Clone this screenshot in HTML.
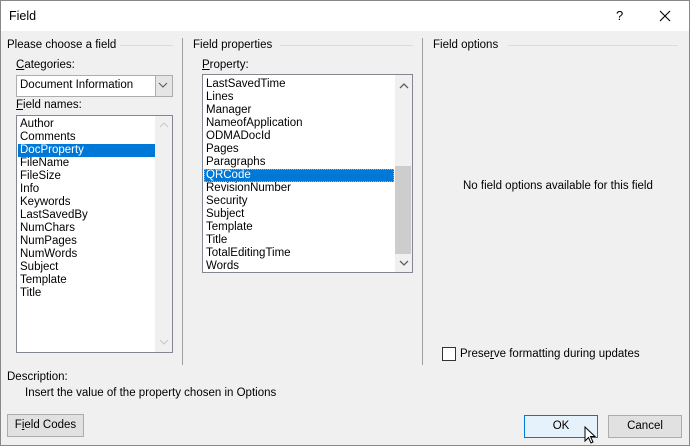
<!DOCTYPE html>
<html><head><meta charset="utf-8"><style>
*{margin:0;padding:0;box-sizing:border-box}
body{width:690px;height:446px;overflow:hidden;background:#f0f0f0;font-family:"Liberation Sans",sans-serif;font-size:11.5px;color:#000;position:relative}
.a{position:absolute;white-space:nowrap}
.win{position:absolute;left:0;top:0;width:690px;height:446px;border:1px solid #888;}
.title{position:absolute;left:1px;top:1px;width:688px;height:30px;background:#fff}
.line{position:absolute;height:1px;background:#dcdcdc}
.vl{position:absolute;width:1px;background:#a0a0a0}
.list{position:absolute;background:#fff;border:1px solid #828790}
.it{position:absolute;left:3px;height:13px;line-height:13px}
.sel{background:#0078d7;color:#fff}
u{text-decoration:underline}
.btn{position:absolute;border:1px solid #adadad;background:#e1e1e1;text-align:center;line-height:21px}
.sb{position:absolute;background:#f0f0f0}
</style></head><body>
<div class="win"></div>
<div class="title"></div>
<div class="a" style="left:9px;top:9px;font-size:12.5px">Field</div>
<div class="a" style="left:616px;top:8px;font-size:13px">?</div>
<svg class="a" style="left:659px;top:10px" width="12" height="12"><path d="M1 1L11 11M11 1L1 11" stroke="#000" stroke-width="1.1"/></svg>

<div class="a" style="left:7px;top:39px">Please choose a field</div>
<div class="line" style="left:120px;top:45px;width:53px"></div>
<div class="vl" style="left:182px;top:38px;height:327px"></div>
<div class="a" style="left:16px;top:59px"><u>C</u>ategories:</div>
<div class="a" style="left:16px;top:75px;width:157px;height:22px;background:#fff;border:1px solid #adadad"></div>
<div class="a" style="left:20px;top:79px">Document Information</div>
<div class="a" style="left:155px;top:76px;width:17px;height:20px;background:#e5e5e5;border-left:1px solid #adadad"></div>
<svg class="a" style="left:158px;top:82px" width="10" height="6"><path d="M1 1L5 5L9 1" stroke="#555" fill="none"/></svg>
<div class="a" style="left:16px;top:99px"><u>F</u>ield names:</div>
<div class="list" style="left:16px;top:115px;width:157px;height:238px">
<div class="sb" style="left:138px;top:0;width:17px;height:236px"></div>
<svg class="a" style="left:142px;top:6px" width="10" height="6"><path d="M1 5L5 1L9 5" stroke="#c8c8c8" fill="none"/></svg>
<svg class="a" style="left:142px;top:223px" width="10" height="6"><path d="M1 1L5 5L9 1" stroke="#c8c8c8" fill="none"/></svg>
<div class="it" style="top:2px">Author</div>
<div class="it" style="top:15px">Comments</div>
<div class="it sel" style="top:28px;left:1px;width:137px;padding-left:2px">DocProperty</div>
<div class="it" style="top:41px">FileName</div>
<div class="it" style="top:54px">FileSize</div>
<div class="it" style="top:67px">Info</div>
<div class="it" style="top:80px">Keywords</div>
<div class="it" style="top:93px">LastSavedBy</div>
<div class="it" style="top:106px">NumChars</div>
<div class="it" style="top:119px">NumPages</div>
<div class="it" style="top:132px">NumWords</div>
<div class="it" style="top:145px">Subject</div>
<div class="it" style="top:158px">Template</div>
<div class="it" style="top:171px">Title</div>
</div>

<div class="a" style="left:193px;top:39px">Field properties</div>
<div class="line" style="left:280px;top:45px;width:133px"></div>
<div class="vl" style="left:422px;top:38px;height:327px"></div>
<div class="a" style="left:202px;top:59px"><u>P</u>roperty:</div>
<div class="list" style="left:202px;top:74px;width:211px;height:199px">
<div class="sb" style="left:192px;top:0;width:17px;height:197px"></div>
<div class="a" style="left:192px;top:91px;width:16px;height:88px;background:#cdcdcd"></div>
<svg class="a" style="left:196px;top:8px" width="10" height="6"><path d="M1 5L5 1L9 5" stroke="#606060" fill="none" stroke-width="1.3"/></svg>
<svg class="a" style="left:196px;top:185px" width="10" height="6"><path d="M1 1L5 5L9 1" stroke="#606060" fill="none" stroke-width="1.3"/></svg>
<div class="it" style="top:3px">LastSavedTime</div>
<div class="it" style="top:16px">Lines</div>
<div class="it" style="top:29px">Manager</div>
<div class="it" style="top:42px">NameofApplication</div>
<div class="it" style="top:55px">ODMADocId</div>
<div class="it" style="top:68px">Pages</div>
<div class="it" style="top:81px">Paragraphs</div>
<div class="it sel" style="top:94px;left:1px;width:190px;padding-left:2px;outline:1px dotted #f0a030;outline-offset:-1px">QRCode</div>
<div class="it" style="top:107px">RevisionNumber</div>
<div class="it" style="top:120px">Security</div>
<div class="it" style="top:133px">Subject</div>
<div class="it" style="top:146px">Template</div>
<div class="it" style="top:159px">Title</div>
<div class="it" style="top:172px">TotalEditingTime</div>
<div class="it" style="top:185px">Words</div>
</div>

<div class="a" style="left:433px;top:39px">Field options</div>
<div class="line" style="left:508px;top:45px;width:170px"></div>
<div class="a" style="left:463px;top:180px">No field options available for this field</div>
<div class="a" style="left:442px;top:347px;width:14px;height:14px;background:#fff;border:1px solid #333"></div>
<div class="a" style="left:460px;top:348px">Prese<u>r</u>ve formatting during updates</div>

<div class="a" style="left:7px;top:371px">Description:</div>
<div class="a" style="left:25px;top:387px">Insert the value of the property chosen in Options</div>

<div class="btn" style="left:7px;top:414px;width:77px;height:23px">F<u>i</u>eld Codes</div>
<div class="btn" style="left:524px;top:415px;width:74px;height:23px;border-color:#0078d7;background:#e5f1fb">OK</div>
<div class="btn" style="left:608px;top:415px;width:74px;height:23px">Cancel</div>
<svg class="a" style="left:584px;top:426px" width="14" height="20"><path d="M1 1L1 15L4.5 11.5L7 17L9 16L6.5 10.5L11 10.5Z" fill="#fff" stroke="#000" stroke-width="1"/></svg>
</body></html>
